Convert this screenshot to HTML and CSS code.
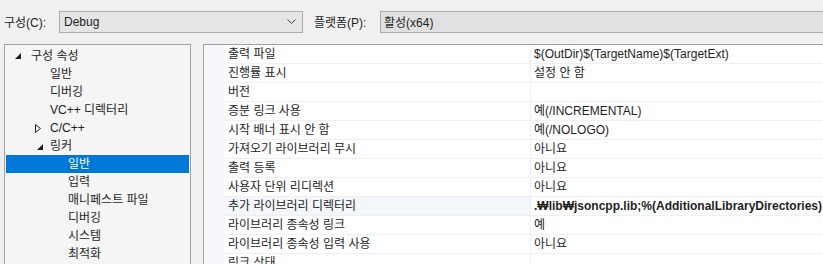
FILE: index.html
```html
<!DOCTYPE html>
<html lang="ko">
<head>
    <meta charset="UTF-8">
    <title>속성 페이지</title>
    <link rel="stylesheet" href="styles.css">
</head>
<body>
    <div class="toolbar">
        <span class="tb-label">구성(C):</span>
        <div class="combo combo-config">
            <span>Debug</span>
            <svg class="chevron" width="9" height="5" viewBox="0 0 9 5"><polyline points="0.5,0.5 4.5,4.5 8.5,0.5" fill="none" stroke="#444" stroke-width="1"/></svg>
        </div>
        <span class="tb-label tb-platform">플랫폼(P):</span>
        <div class="combo combo-platform">
            <span>활성(x64)</span>
        </div>
    </div>
    <div class="main">
        <div class="tree">
            <div class="node lvl0"><svg class="arrow" width="6" height="6" viewBox="0 0 6 6"><polygon points="6,0 6,6 0,6" fill="#1e1e1e"/></svg>구성 속성</div>
            <div class="node lvl1">일반</div>
            <div class="node lvl1">디버깅</div>
            <div class="node lvl1">VC++ 디렉터리</div>
            <div class="node lvl1"><svg class="arrow" width="6" height="9" viewBox="0 0 6 9"><polygon points="0.5,0.5 5.5,4.5 0.5,8.5" fill="none" stroke="#1e1e1e" stroke-width="1"/></svg>C/C++</div>
            <div class="node lvl1"><svg class="arrow" width="6" height="6" viewBox="0 0 6 6"><polygon points="6,0 6,6 0,6" fill="#1e1e1e"/></svg>링커</div>
            <div class="node lvl2 selected">일반</div>
            <div class="node lvl2">입력</div>
            <div class="node lvl2">매니페스트 파일</div>
            <div class="node lvl2">디버깅</div>
            <div class="node lvl2">시스템</div>
            <div class="node lvl2">최적화</div>
        </div>
        <div class="grid">
            <div class="row"><div class="margin"></div><div class="name">출력 파일</div><div class="value">$(OutDir)$(TargetName)$(TargetExt)</div></div>
            <div class="row"><div class="margin"></div><div class="name">진행률 표시</div><div class="value">설정 안 함</div></div>
            <div class="row"><div class="margin"></div><div class="name">버전</div><div class="value"></div></div>
            <div class="row"><div class="margin"></div><div class="name">증분 링크 사용</div><div class="value">예(/INCREMENTAL)</div></div>
            <div class="row"><div class="margin"></div><div class="name">시작 배너 표시 안 함</div><div class="value">예(/NOLOGO)</div></div>
            <div class="row"><div class="margin"></div><div class="name">가져오기 라이브러리 무시</div><div class="value">아니요</div></div>
            <div class="row"><div class="margin"></div><div class="name">출력 등록</div><div class="value">아니요</div></div>
            <div class="row"><div class="margin"></div><div class="name">사용자 단위 리디렉션</div><div class="value">아니요</div></div>
            <div class="row hover"><div class="margin"></div><div class="name">추가 라이브러리 디렉터리</div><div class="value bold">.₩lib₩jsoncpp.lib;%(AdditionalLibraryDirectories)</div></div>
            <div class="row"><div class="margin"></div><div class="name">라이브러리 종속성 링크</div><div class="value">예</div></div>
            <div class="row"><div class="margin"></div><div class="name">라이브러리 종속성 입력 사용</div><div class="value">아니요</div></div>
            <div class="row"><div class="margin"></div><div class="name">링크 상태</div><div class="value"></div></div>
        </div>
    </div>
</body>
</html>
```

FILE: styles.css
```css
html, body {
    margin: 0;
    padding: 0;
    height: 264px;
    overflow: hidden;
}
body {
    background-color: #f0f0f0;
    font-family: "Liberation Sans", "Noto Sans CJK KR", sans-serif;
    font-size: 12px;
    color: #1e1e1e;
}
.toolbar {
    display: flex;
    align-items: center;
    height: 44px;
    padding-left: 4px;
    box-sizing: border-box;
    padding-bottom: 1px;
}
.tb-label {
    width: 55px;
}
.tb-platform {
    margin-left: 11px;
    width: 66px;
}
.combo {
    display: flex;
    align-items: center;
    justify-content: space-between;
    height: 22px;
    box-sizing: border-box;
    border: 1px solid #adadad;
    background-color: #e5e5e5;
    padding: 0 6px 0 4px;
}
.combo-config {
    width: 244px;
}
.combo-platform {
    flex: 1;
    border-right: none;
    background-color: #e1e1e1;
    padding-left: 3px;
}
.chevron {
    display: block;
}
.main {
    display: flex;
    gap: 12px;
    padding-left: 4px;
}
.tree {
    width: 187px;
    height: 230px;
    box-sizing: border-box;
    flex-shrink: 0;
    border: 1px solid #a0a0a0;
    background-color: #f5f5f5;
    padding: 2px 1px 0 1px;
}
.node {
    position: relative;
    height: 18px;
    line-height: 18px;
    white-space: nowrap;
}
.lvl0 { padding-left: 25px; }
.lvl1 { padding-left: 44px; }
.lvl2 { padding-left: 62px; }
.arrow {
    position: absolute;
    top: 6px;
}
.lvl0 .arrow { left: 9px; }
.lvl1 .arrow { left: 29px; top: 5px; }
.lvl1 .arrow[height="6"] { left: 31px; top: 7px; }
.selected {
    background-color: #0078d7;
    color: #ffffff;
}
.grid {
    flex: 1;
    border-top: 1px solid #a0a0a0;
    border-left: 1px solid #a0a0a0;
    background-color: #ffffff;
}
.row {
    display: flex;
    height: 19px;
    line-height: 18px;
    white-space: nowrap;
}
.margin {
    width: 20px;
    flex-shrink: 0;
    background-color: #f5f7fc;
}
.name {
    width: 302px;
    flex-shrink: 0;
    padding-left: 4px;
    border-bottom: 1px solid #eef0f5;
    border-right: 1px solid #eef0f5;
}
.value {
    flex: 1;
    padding-left: 3px;
    border-bottom: 1px solid #eef0f5;
}
.hover .name {
    background-color: #f3f6fb;
}
.bold {
    font-weight: bold;
}
```
